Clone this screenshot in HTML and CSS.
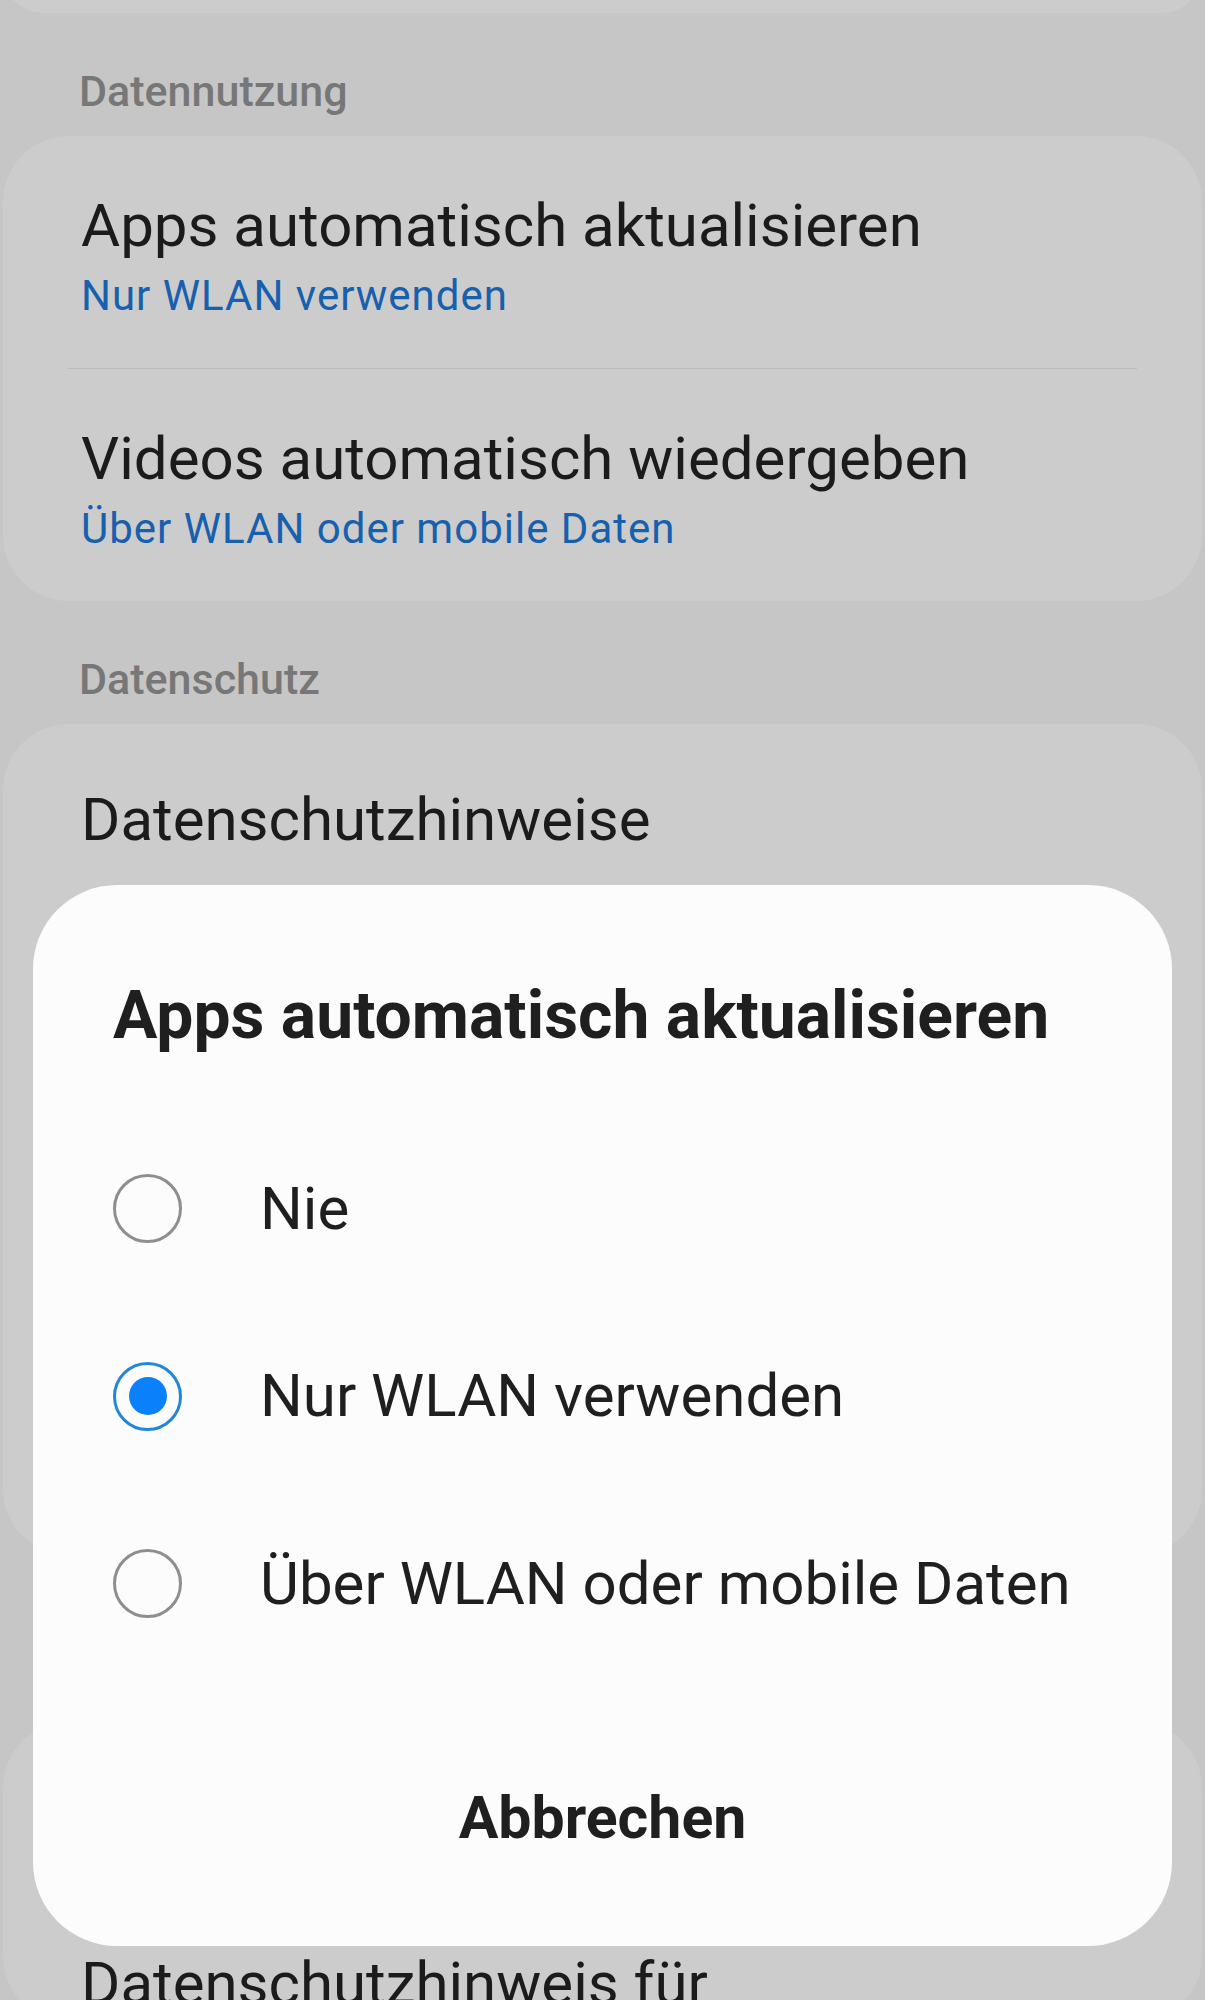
FILE: index.html
```html
<!DOCTYPE html>
<html lang="de">
<head>
    <meta charset="UTF-8">
    <meta name="viewport" content="width=device-width, initial-scale=1.0">
    <title>Einstellungen</title>
    <link rel="stylesheet" href="styles.css">
</head>
<body>
    <div class="card card-stub"></div>

    <h2 class="section-title">Datennutzung</h2>
    <div class="card">
        <div class="item">
            <div class="item-title">Apps automatisch aktualisieren</div>
            <div class="item-sub">Nur WLAN verwenden</div>
        </div>
        <div class="divider"></div>
        <div class="item">
            <div class="item-title">Videos automatisch wiedergeben</div>
            <div class="item-sub">Über WLAN oder mobile Daten</div>
        </div>
    </div>

    <h2 class="section-title">Datenschutz</h2>
    <div class="card card-privacy">
        <div class="item item-single">
            <div class="item-title">Datenschutzhinweise</div>
        </div>
    </div>

    <div class="card card-more">
        <div class="item item-single">
            <div class="item-title">Datenschutzhinweis für</div>
        </div>
    </div>

    <!-- Auswahldialog -->
    <div class="dialog">
        <h1 class="dialog-title">Apps automatisch aktualisieren</h1>
        <div class="options">
            <div class="option">
                <span class="radio"></span>
                <span class="option-label">Nie</span>
            </div>
            <div class="option">
                <span class="radio checked"></span>
                <span class="option-label">Nur WLAN verwenden</span>
            </div>
            <div class="option">
                <span class="radio"></span>
                <span class="option-label">Über WLAN oder mobile Daten</span>
            </div>
        </div>
        <div class="actions">
            <button class="cancel">Abbrechen</button>
        </div>
    </div>
</body>
</html>
```

FILE: styles.css
```css
body {
    margin: 0;
    background-color: #c6c6c6;
    font-family: Roboto, "Noto Sans", sans-serif;
    color: #1c1c1c;
    overflow: hidden;
    height: 2000px;
    position: relative;
}
.card {
    margin: 0 3px;
    background-color: #cccccc;
    border-radius: 66px;
}
.card-stub {
    height: 80px;
    margin-top: -67px;
}
.section-title {
    margin: 0;
    padding: 53px 79px 20px;
    font-size: 43px;
    line-height: 50px;
    font-weight: 500;
    color: #777777;
}
.item {
    padding: 54px 78px 46px;
}
.item-title {
    font-size: 60px;
    line-height: 72px;
    color: #1b1b1b;
}
.item-sub {
    margin-top: 8px;
    font-size: 42px;
    line-height: 52px;
    letter-spacing: 1px;
    color: #1660ad;
}
.divider {
    height: 1px;
    margin: 0 65px;
    background-color: #bcbcbc;
}
.item-single {
    padding-top: 60px;
}
.card-privacy {
    height: 831px;
}
.card-more {
    margin-top: 167px;
    height: 300px;
}
.card-more .item-single {
    padding-top: 226px;
}
/* dialog */
.dialog {
    position: absolute;
    top: 885px;
    left: 33px;
    width: 1139px;
    height: 1061px;
    box-sizing: border-box;
    padding: 92px 80px 0;
    background-color: #fcfcfc;
    border-radius: 84px;
}
.dialog-title {
    margin: 0;
    font-size: 66px;
    line-height: 78px;
    font-weight: 700;
    color: #1f1f1f;
}
.options {
    margin-top: 60px;
}
.option {
    display: flex;
    align-items: center;
    height: 187.5px;
}
.radio {
    box-sizing: border-box;
    width: 69px;
    height: 69px;
    border: 3px solid #8e8e8e;
    border-radius: 50%;
    display: flex;
    align-items: center;
    justify-content: center;
    flex-shrink: 0;
}
.radio.checked {
    border-color: #2386dc;
}
.radio.checked::after {
    content: "";
    width: 38px;
    height: 38px;
    border-radius: 50%;
    background-color: #0b80fb;
}
.option-label {
    margin-left: 78px;
    font-size: 60px;
    line-height: 72px;
    color: #1f1f1f;
}
.actions {
    margin-top: 105px;
    text-align: center;
}
.cancel {
    padding: 0;
    border: none;
    background: none;
    font-family: Roboto, "Noto Sans", sans-serif;
    font-size: 59px;
    line-height: 70px;
    font-weight: 700;
    color: #1f1f1f;
}
```
